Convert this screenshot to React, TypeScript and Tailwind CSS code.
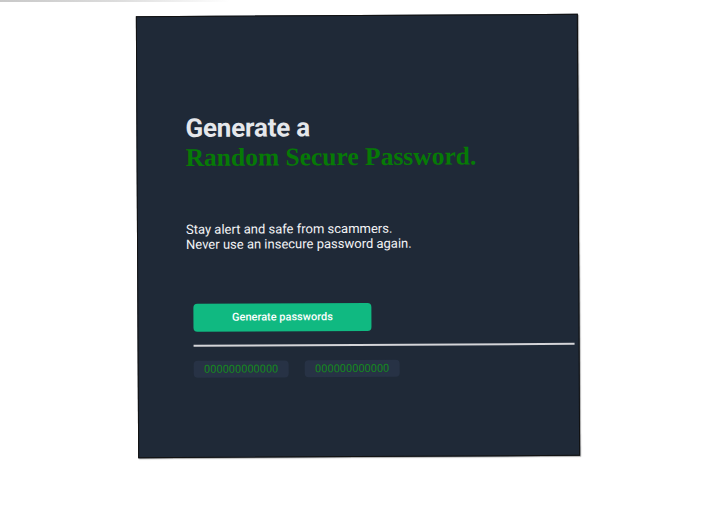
function PasswordChip({ value }: { value: string }) {
  return (
    <div className="w-[95px] h-[17px] rounded-[4px] bg-[#273245] flex items-center justify-center text-[11px] leading-none text-[#15891f] font-['Roboto',sans-serif]">
      {value}
    </div>
  )
}

export default function App() {
  return (
    <div className="min-h-[513px] bg-white font-['Roboto',sans-serif]">
      <div className="h-[2px] w-[230px] bg-linear-to-r from-[#c8c8c8] via-[#dcdcdc] to-white" />
      <div className="ml-[137px] mt-[13px] w-[442px] h-[442px] -rotate-[0.3deg] bg-[#1f2937] border border-[#111] shadow-[1px_1px_1px_rgba(0,0,0,0.35)] pt-[97px]">
        <div className="pl-[48px]">
          <h1 className="text-[26px] leading-[28px] font-bold text-[#e5e7eb] tracking-[-0.2px]">Generate a</h1>
          <h2 className="mt-[2px] text-[25.5px] leading-[28px] font-bold text-[#067a06] font-['Liberation_Serif',serif]">
            Random Secure Password.
          </h2>
          <p className="mt-[50px] text-[13px] leading-[15px] text-[#f3f4f6]">
            Stay alert and safe from scammers.
            <br />
            Never use an insecure password again.
          </p>
        </div>
        <div className="ml-[55px] mr-[4px] mt-[52px]">
          <button className="w-[178px] h-[28px] rounded-[4px] bg-[#10b981] text-white text-[11px] font-medium">
            Generate passwords
          </button>
          <div className="mt-[13px] h-[2px] bg-[#d4d4d8]" />
          <div className="mt-[14px] flex gap-[16px]">
            <PasswordChip value="000000000000" />
            <PasswordChip value="000000000000" />
          </div>
        </div>
      </div>
    </div>
  )
}
